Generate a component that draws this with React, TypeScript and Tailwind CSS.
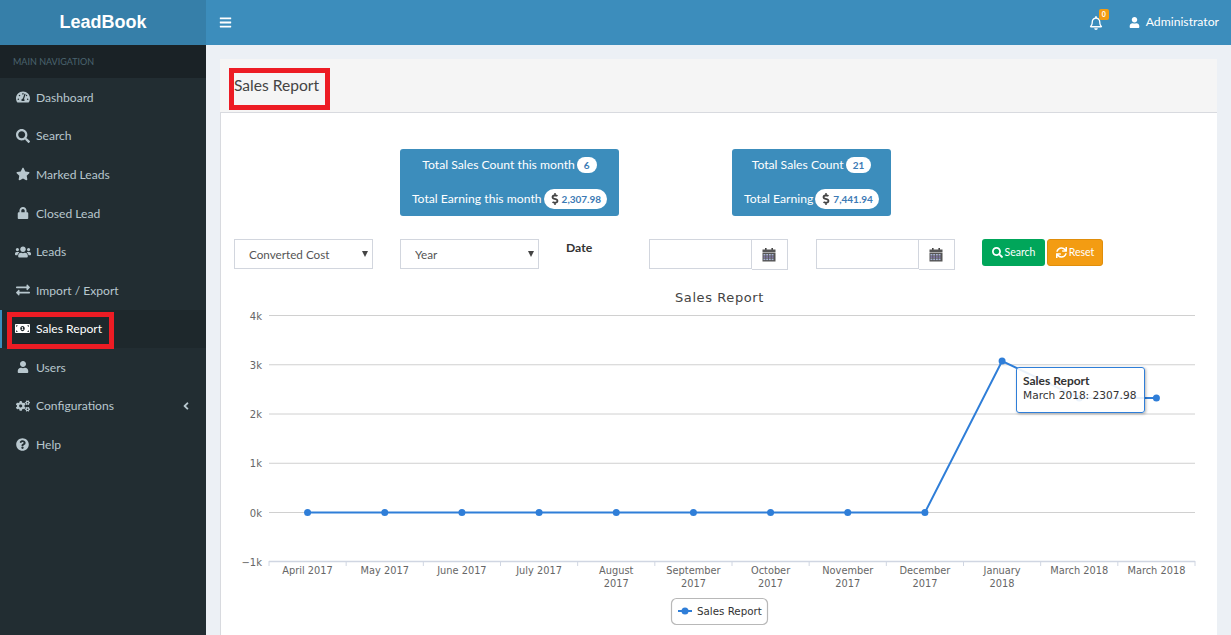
import { ReactNode } from 'react';
import {
  FaAngleLeft,
  FaBars,
  FaCogs,
  FaDollarSign,
  FaExchangeAlt,
  FaLock,
  FaMoneyBillAlt,
  FaQuestionCircle,
  FaRegBell,
  FaSearch,
  FaStar,
  FaSync,
  FaTachometerAlt,
  FaUser,
  FaUsers,
} from 'react-icons/fa';

const navItems: { label: string; icon: ReactNode; active?: boolean; caret?: boolean }[] = [
  { label: 'Dashboard', icon: <FaTachometerAlt /> },
  { label: 'Search', icon: <FaSearch /> },
  { label: 'Marked Leads', icon: <FaStar /> },
  { label: 'Closed Lead', icon: <FaLock className="text-[12px]" /> },
  { label: 'Leads', icon: <FaUsers className="text-[16px]" /> },
  { label: 'Import / Export', icon: <FaExchangeAlt /> },
  { label: 'Sales Report', icon: <FaMoneyBillAlt className="text-[15px]" />, active: true },
  { label: 'Users', icon: <FaUser className="text-[12px]" /> },
  { label: 'Configurations', icon: <FaCogs />, caret: true },
  { label: 'Help', icon: <FaQuestionCircle className="text-[13px]" /> },
];

const categories = [
  ['April 2017'],
  ['May 2017'],
  ['June 2017'],
  ['July 2017'],
  ['August', '2017'],
  ['September', '2017'],
  ['October', '2017'],
  ['November', '2017'],
  ['December', '2017'],
  ['January', '2018'],
  ['March 2018'],
  ['March 2018'],
];

const yTicks = [
  { label: '4k', y: 315.5 },
  { label: '3k', y: 364.75 },
  { label: '2k', y: 414 },
  { label: '1k', y: 463.25 },
  { label: '0k', y: 512.5 },
];

const slot = 926 / 12;
const xAt = (i: number) => 269 + slot * i + slot / 2;
const pointY = (i: number) => (i === 9 ? 361 : i >= 10 ? 398 : 512.5);
const plotted = [0, 1, 2, 3, 4, 5, 6, 7, 8, 9, 10, 11];

function CalendarIcon() {
  return (
    <svg width="14" height="14" viewBox="0 0 14 14" className="-ml-[2px]">
      <rect x="3" y="0" width="1.6" height="3" fill="#444" />
      <rect x="9.4" y="0" width="1.6" height="3" fill="#444" />
      <rect x="0.5" y="1.5" width="13" height="3" fill="#555" />
      <rect x="0.5" y="5" width="13" height="8.5" fill="#555" />
      {[6, 8.3, 10.6].map((y) =>
        [1.5, 4.2, 6.9, 9.6].map((x) => (
          <rect key={`${x}-${y}`} x={x} y={y} width="1.9" height="1.5" fill={y === 8.3 ? '#8b7fb8' : '#a9b4d6'} />
        )),
      )}
    </svg>
  );
}

function Sidebar() {
  return (
    <aside className="w-[206px] shrink-0 bg-[#222d32] text-[#b8c7ce]">
      <div className="h-[45px] bg-[#367fa9] flex items-center justify-center text-white text-[18px] font-bold font-['Liberation_Sans',sans-serif]">
        LeadBook
      </div>
      <div className="h-[33px] bg-[#1a2226] flex items-center pl-[13px] text-[9px] text-[#4b646f]">
        MAIN NAVIGATION
      </div>
      {navItems.map((item) => (
        <div
          key={item.label}
          className={`relative h-[38.6px] flex items-center text-[12.1px] ${
            item.active ? 'bg-[#1e282c] text-white' : ''
          }`}
        >
          {item.active && <div className="w-[2px] h-full bg-[#3c8dbc] absolute left-0 top-0" />}
          <span className="w-[36px] flex justify-center pl-[9px] text-[14px]">{item.icon}</span>
          <span className="pt-[1px]">{item.label}</span>
          {item.caret && <FaAngleLeft className="absolute left-[180px] top-[13px] text-[12px]" />}
          {item.active && (
            <div className="absolute left-[7px] top-[2px] w-[107px] h-[37px] border-[5px] border-[#ed1c24]" />
          )}
        </div>
      ))}
    </aside>
  );
}

function TopBar() {
  return (
    <header className="h-[45px] bg-[#3c8dbc] flex items-center pl-[13px] pr-[12px] text-white">
      <FaBars className="text-[13px]" />
      <div className="ml-auto relative mr-[26px]">
        <FaRegBell className="text-[14px]" />
        <span className="absolute left-[10px] top-[-7px] w-[10px] h-[11px] rounded-[2px] bg-[#f39c12] text-[7px] font-bold flex items-center justify-center">
          0
        </span>
      </div>
      <FaUser className="text-[11px] mr-[6px]" />
      <span className="text-[12.2px]">Administrator</span>
    </header>
  );
}

function Pill({ children }: { children: ReactNode }) {
  return (
    <span className="ml-[2px] inline-flex items-center bg-white rounded-full text-[#3c7ab5] text-[10px] font-bold leading-none">
      {children}
    </span>
  );
}

function StatBox({
  width,
  countLabel,
  count,
  earnLabel,
  earn,
}: {
  width: string;
  countLabel: string;
  count: string;
  earnLabel: string;
  earn: string;
}) {
  return (
    <div className={`${width} h-[67px] rounded-[3px] bg-[#3c8dbc] text-white text-[12.2px] flex flex-col items-center`}>
      <div className="h-[31px] flex items-center pt-[1px]">
        {countLabel}
        <Pill>
          <span className="px-[7px] py-[3px]">{count}</span>
        </Pill>
      </div>
      <div className="mt-[3px] h-[32px] flex items-center">
        {earnLabel}
        <Pill>
          <span className="flex items-center gap-[1px] pl-[5px] pr-[6px] h-[20px]">
            <FaDollarSign className="text-[#444] text-[12px]" />
            {earn}
          </span>
        </Pill>
      </div>
    </div>
  );
}

function FilterSelect({ label, className }: { label: string; className: string }) {
  return (
    <div className={`relative h-[30px] w-[139px] ${className}`}>
      <select className="appearance-none w-full h-full border border-[#d2d6de] bg-white pl-[14px] pt-[1px] text-[11.7px] text-[#555]">
        <option>{label}</option>
      </select>
      <span className="absolute right-[5px] top-[12px] w-0 h-0 border-x-[3.5px] border-x-transparent border-t-[6px] border-t-[#444]" />
    </div>
  );
}

function DateInput({ className }: { className: string }) {
  return (
    <div className={`flex ${className}`}>
      <input className="w-[103px] h-[30px] border border-[#d2d6de] bg-white" />
      <span className="w-[36px] h-[31px] border border-l-0 border-[#d2d6de] flex items-center justify-center">
        <CalendarIcon />
      </span>
    </div>
  );
}

function Chart() {
  return (
    <div className="relative h-[350px]">
      <svg
        viewBox="221 285 996 350"
        width="996"
        height="350"
        className="block font-['DejaVu_Sans',sans-serif]"
      >
        <text x="719.5" y="301.5" textAnchor="middle" fontSize="13" letterSpacing="0.6" fill="#444">
          Sales Report
        </text>
        {yTicks.map((t) => (
          <g key={t.label}>
            <line x1="269" x2="1195" y1={t.y} y2={t.y} stroke="#d0d0d0" />
            <text x="262" y={t.y + 4} textAnchor="end" fontSize="10" fill="#666">
              {t.label}
            </text>
          </g>
        ))}
        <text x="262" y="565.5" textAnchor="end" fontSize="10" fill="#666">
          −1k
        </text>
        <line x1="269" x2="1195" y1="561.5" y2="561.5" stroke="#d0d6e2" strokeWidth="1.5" />
        {categories.map((lines, i) => (
          <g key={i}>
            <line x1={269 + slot * i} x2={269 + slot * i} y1="561" y2="566" stroke="#d0d6e2" />
            {lines.map((l, j) => (
              <text
                key={l}
                x={xAt(i)}
                y={574 + j * 13}
                textAnchor="middle"
                fontSize="9.8"
                fill="#666"
              >
                {l}
              </text>
            ))}
          </g>
        ))}
        <line x1="1195" x2="1195" y1="561" y2="566" stroke="#d0d6e2" />
        <polyline
          points={plotted.map((i) => `${xAt(i)},${pointY(i)}`).join(' ')}
          fill="none"
          stroke="#2f7ed8"
          strokeWidth="2"
        />
        {plotted.map((i) => (
          <circle key={i} cx={xAt(i)} cy={pointY(i)} r="3.5" fill="#2f7ed8" />
        ))}
        <rect x="671.5" y="598.5" width="96" height="26" rx="5" fill="#fff" stroke="#b8b8b8" strokeWidth="1.2" />
        <line x1="678" x2="692" y1="611" y2="611" stroke="#2f7ed8" strokeWidth="2" />
        <circle cx="685" cy="611" r="3.5" fill="#2f7ed8" />
        <text x="697" y="615" fontSize="10.3" fill="#333">
          Sales Report
        </text>
      </svg>
      <div className="absolute left-[795px] top-[82px] w-[129px] h-[46px] rounded-[3px] border border-[#2f7ed8] bg-white/90 shadow-[1px_1px_3px_rgba(0,0,0,0.3)] px-[6px] pt-[5px] font-['DejaVu_Sans',sans-serif] text-[10.6px] leading-[15px] text-[#333]">
        <div className="font-bold font-['Lato',sans-serif] text-[12px]">Sales Report</div>
        <div>March 2018: 2307.98</div>
      </div>
    </div>
  );
}

export default function App() {
  return (
    <div className="flex h-screen overflow-hidden bg-[#ecf0f5] font-['Lato',sans-serif]">
      <Sidebar />
      <div className="flex-1 min-w-0">
        <TopBar />
        <main className="pt-[14px] pl-[14px] pr-[14px]">
          <section className="rounded-t-[3px] bg-white">
            <div className="h-[54px] bg-[#f5f5f5] border-b border-[#d8dadf] pl-[9px] pt-[9px]">
              <div className="w-[101px] h-[42px] border-[5px] border-[#ed1c24] flex items-center text-[#444] text-[15.6px]">
                <span className="-mt-[7px] whitespace-nowrap">Sales Report</span>
              </div>
            </div>
            <div className="border-l border-[#d8dadf] pt-[36px]">
              <div className="flex">
                <StatBox
                  width="ml-[179px] w-[219px]"
                  countLabel="Total Sales Count this month"
                  count="6"
                  earnLabel="Total Earning this month"
                  earn="2,307.98"
                />
                <StatBox
                  width="ml-[113px] w-[159px]"
                  countLabel="Total Sales Count"
                  count="21"
                  earnLabel="Total Earning"
                  earn="7,441.94"
                />
              </div>
              <div className="flex items-start mt-[23px]">
                <FilterSelect label="Converted Cost" className="ml-[13px]" />
                <FilterSelect label="Year" className="ml-[27px]" />
                <div className="ml-[27px] w-[83px] text-[12.2px] font-bold text-[#333]">Date</div>
                <DateInput className="" />
                <DateInput className="ml-[28px]" />
                <button className="ml-[27px] w-[63px] h-[27px] rounded-[3px] bg-[#00a65a] text-white text-[10.5px] flex items-center justify-center gap-[2px]">
                  <FaSearch className="text-[11px]" /> Search
                </button>
                <button className="ml-[2px] w-[56px] h-[27px] rounded-[3px] border border-[#e08e0b] bg-[#f39c12] text-white text-[10.5px] flex items-center justify-center gap-[2px]">
                  <FaSync className="text-[11px]" /> Reset
                </button>
              </div>
              <div className="mt-[15px]">
                <Chart />
              </div>
            </div>
          </section>
        </main>
      </div>
    </div>
  );
}
